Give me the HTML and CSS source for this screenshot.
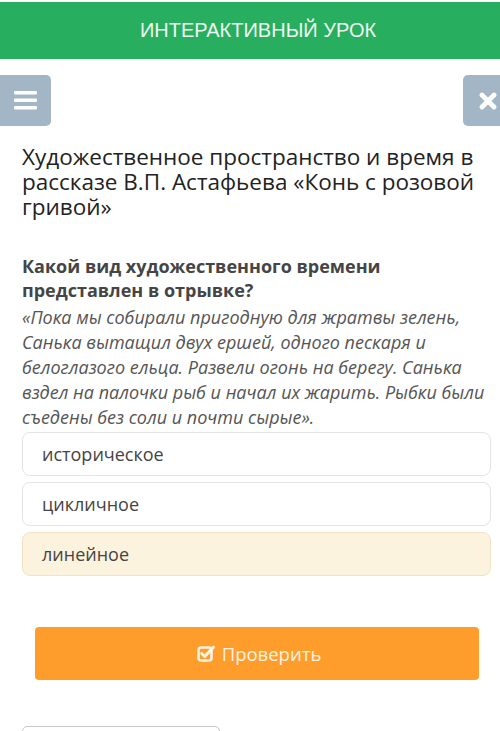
FILE: index.html
```html
<!DOCTYPE html>
<html lang="ru">
<head>
<meta charset="utf-8">
<link rel="stylesheet" href="styles.css">
</head>
<body>
<header class="topbar">ИНТЕРАКТИВНЫЙ УРОК</header>
<div class="toolbar">
  <button class="tool tool-menu" aria-label="menu">
    <svg width="23" height="19" viewBox="0 0 23 19"><rect x="0" y="0" width="23" height="3.6" rx="1" fill="#fff"/><rect x="0" y="7.5" width="23" height="3.6" rx="1" fill="#fff"/><rect x="0" y="15" width="23" height="3.6" rx="1" fill="#fff"/></svg>
  </button>
  <button class="tool tool-close" aria-label="close">
    <svg width="18" height="18" viewBox="0 0 18 18"><path d="M3 3 L15 15 M15 3 L3 15" stroke="#fff" stroke-width="4.8" stroke-linecap="round"/></svg>
  </button>
</div>
<main class="content">
  <h1 class="title">Художественное пространство и время в рассказе В.П. Астафьева «Конь с розовой гривой»</h1>
  <h2 class="question">Какой вид художественного времени представлен в отрывке?</h2>
  <p class="quote">«Пока мы собирали пригодную для жратвы зелень, Санька вытащил двух ершей, одного пескаря и белоглазого ельца. Развели огонь на берегу. Санька вздел на палочки рыб и начал их жарить. Рыбки были съедены без соли и почти сырые».</p>
  <div class="options">
    <div class="option">историческое</div>
    <div class="option">цикличное</div>
    <div class="option option-selected">линейное</div>
  </div>
  <button class="check">
    <svg width="18" height="17" viewBox="0 0 18 17"><rect x="1.5" y="2.5" width="13" height="13" rx="2.5" fill="none" stroke="#fff4e0" stroke-width="2.6"/><path d="M4.8 8.6 L7.8 11.4 L16.5 2.2" fill="none" stroke="#fff4e0" stroke-width="3" stroke-linecap="round" stroke-linejoin="round"/></svg>
    <span>Проверить</span>
  </button>
  <div class="bottom-box"></div>
</main>
</body>
</html>
```
FILE: styles.css
```css
* { box-sizing: border-box; }
html, body { margin: 0; padding: 0; background: #fff; }
body { font-family: "Open Sans", "Noto Sans", sans-serif; overflow: hidden; height: 731px; }

.topbar {
  margin-top: 2px;
  height: 57px;
  background: #28ae5f;
  color: #eef7f0;
  font-family: "Liberation Sans", Arial, sans-serif;
  font-size: 20px;
  display: flex;
  align-items: center;
  justify-content: center;
  padding-left: 16px;
}

.toolbar {
  display: flex;
  justify-content: space-between;
  margin-top: 16px;
}
.tool {
  width: 51px;
  height: 51px;
  border: none;
  background: #a3b6c6;
  display: flex;
  align-items: center;
  justify-content: center;
  padding: 0;
}
.tool-menu { border-radius: 0 5px 5px 0; }
.tool-close { width: 37px; border-radius: 5px 0 0 5px; justify-content: flex-start; padding-left: 16px; }

.content { padding: 0 9px 0 22px; }

.title {
  margin: 18px 0 0;
  font-weight: 400;
  font-size: 22.5px;
  line-height: 25px;
  color: #222;
}

.question {
  margin: 35px 0 0;
  font-weight: 700;
  font-size: 18px;
  line-height: 24px;
  color: #454545;
}

.quote {
  margin: 3px 0 0;
  font-style: italic;
  font-size: 18px;
  line-height: 25px;
  color: #555;
}

.options {
  display: flex;
  flex-direction: column;
  gap: 6px;
  margin-top: 2px;
}
.option {
  height: 44px;
  border: 1px solid #e4e4e4;
  border-radius: 8px;
  padding: 0 19px;
  display: flex;
  align-items: center;
  font-size: 18px;
  color: #444;
  background: #fff;
}
.option-selected {
  background: #fcf3df;
  border-color: #f1e3c3;
}

.check {
  margin: 51px 0 0 13px;
  width: 444px;
  height: 53px;
  border: none;
  border-radius: 4px;
  background: #ff9d2c;
  color: #fff4e2;
  font-family: "Open Sans", sans-serif;
  font-size: 18.5px;
  display: flex;
  align-items: center;
  justify-content: center;
  gap: 7px;
  padding: 0 0 0 4px;
}

.bottom-box {
  margin-top: 46px;
  width: 198px;
  height: 40px;
  border: 1px solid #c9c9c9;
  border-radius: 5px;
}
```
